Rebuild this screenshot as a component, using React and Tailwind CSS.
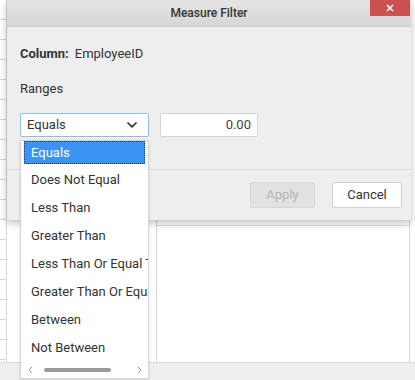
import { useState } from 'react'

const OPTIONS = [
  'Equals',
  'Does Not Equal',
  'Less Than',
  'Greater Than',
  'Less Than Or Equal To',
  'Greater Than Or Equal To',
  'Between',
  'Not Between',
]

function Chevron() {
  return (
    <svg width="10" height="6" viewBox="0 0 10 6" fill="none">
      <path d="M1 1l4 3.8L9 1" stroke="#333" strokeWidth="1.7" strokeLinecap="round" strokeLinejoin="round" />
    </svg>
  )
}

function Background() {
  return (
    <div className="flex flex-col w-full h-full">
      <div className="flex flex-1">
        {/* grid strip on the left */}
        <div className="w-[7px] flex flex-col border-r border-[#d6d6d6]">
          {Array.from({ length: 18 }).map((_, i) => (
            <div key={i} className="h-[20px] shrink-0 border-b border-[#d6d6d6]" />
          ))}
        </div>
        <div className="w-[149px]" />
        {/* panel behind the dialog */}
        <div className="w-[254px] flex flex-col border-l border-r border-[#d6d6d6]">
          <div className="h-[226px] border-b border-[#dcdcdc]" />
          <div className="flex-1 bg-white" />
        </div>
      </div>
      <div className="h-[18px] bg-[#efefef] border-t border-[#d9d9d9]" />
    </div>
  )
}

export default function App() {
  const [value] = useState('Equals')

  return (
    <div className="relative w-[415px] h-[380px] bg-white overflow-hidden font-['Roboto',sans-serif] text-[#333]">
      <Background />

      {/* Dialog */}
      <div className="absolute left-[7px] top-0 w-[404px] h-[220px] bg-[#eeeeee] shadow-[0_3px_8px_rgba(0,0,0,0.25)] flex flex-col">
        <div className="relative h-[27px] bg-gradient-to-b from-[#e4e4e4] to-[#d7d7d7] border-b border-[#cfcfcf] flex items-center justify-center">
          <span className="text-[12px] font-medium text-[#333]">Measure Filter</span>
          <button className="absolute right-[1px] top-0 w-[40px] h-[16px] bg-[#c9514f] flex items-center justify-center">
            <svg width="8" height="8" viewBox="0 0 8 8">
              <path d="M1 1l6 6M7 1L1 7" stroke="#fff" strokeWidth="1.5" />
            </svg>
          </button>
        </div>

        <div className="px-[13px] pt-[17px] flex flex-col">
          <div className="flex items-center gap-[6px] text-[13px] h-[20px]">
            <span className="font-bold">Column:</span>
            <span>EmployeeID</span>
          </div>
          <div className="text-[13px] mt-[15px] h-[20px] flex items-center">Ranges</div>
          <div className="flex items-center gap-[11px] mt-[14px]">
            <div className="w-[129px] h-[24px] bg-white border border-[#8fbcea] rounded-[2px] flex items-center justify-between pl-[6px] pr-[11px] text-[13px]">
              <span>{value}</span>
              <Chevron />
            </div>
            <div className="w-[98px] h-[24px] bg-white border border-[#d4d4d4] rounded-[2px] flex items-center justify-end pr-[6px] text-[13px] text-[#444]">
              0.00
            </div>
          </div>
        </div>

        <div className="mt-[32px] border-t border-[#dadada] flex justify-end gap-[17px] pr-[9px] pt-[12px]">
          <button className="w-[65px] h-[26px] bg-[#e2e2e2] border border-[#d8d8d8] rounded-[2px] text-[13px] text-[#b3b3b3]">
            Apply
          </button>
          <button className="w-[70px] h-[26px] bg-white border border-[#d0d0d0] rounded-[2px] text-[13px] text-[#333]">
            Cancel
          </button>
        </div>
      </div>

      {/* Dropdown list over the dialog */}
      <div className="absolute left-[20px] top-[140px] w-[129px] h-[239px] bg-white border border-[#d6d6d6] shadow-[0_1px_3px_rgba(0,0,0,0.12)] flex flex-col text-[13px]">
        {OPTIONS.map((opt, i) =>
          i === 0 ? (
            <div key={opt} className="h-[25px] shrink-0 px-[3px]">
              <div className="h-[23px] bg-[#3c94f2] text-white outline-1 outline-dotted outline-[#1a3a66] -outline-offset-1 flex items-center pl-[7px] whitespace-nowrap">
                {opt}
              </div>
            </div>
          ) : (
            <div key={opt} className="h-[28px] shrink-0 flex items-center pl-[10px] whitespace-nowrap overflow-hidden">
              {opt}
            </div>
          )
        )}
        <div className="h-[16px] shrink-0 flex items-center pl-[7px] pr-[6px] gap-[11px]">
          <svg width="5" height="8" viewBox="0 0 5 8">
            <path d="M4 1L1 4l3 3" stroke="#999" strokeWidth="1" fill="none" />
          </svg>
          <div className="w-[67px] h-[4px] rounded-full bg-[#9a9a9a]" />
          <div className="flex-1" />
          <svg width="5" height="8" viewBox="0 0 5 8">
            <path d="M1 1l3 3-3 3" stroke="#999" strokeWidth="1" fill="none" />
          </svg>
        </div>
      </div>
    </div>
  )
}
